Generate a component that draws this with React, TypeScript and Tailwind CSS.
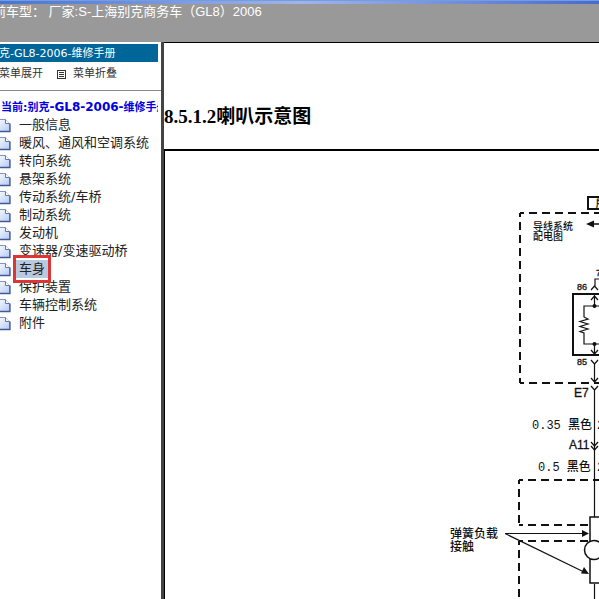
const systems = [
  '一般信息',
  '暖风、通风和空调系统',
  '转向系统',
  '悬架系统',
  '传动系统/车桥',
  '制动系统',
  '发动机',
  '变速器/变速驱动桥',
  '车身',
  '保护装置',
  '车辆控制系统',
  '附件',
];

function PageIcon() {
  return (
    <svg className="h-4 w-3 shrink-0" viewBox="0 0 12 16">
      <defs>
        <linearGradient id="page" x1="0" y1="0" x2="1" y2="1">
          <stop offset="0" stopColor="#ffffff" />
          <stop offset="1" stopColor="#b4caf4" />
        </linearGradient>
      </defs>
      <path d="M-4 2.5H5.5L9.5 6.5V14.5H-4Z" fill="url(#page)" stroke="#8296c4" />
      <path d="M5.5 2.5V6.5H9.5" fill="#fff" stroke="#6379ab" />
      <path d="M-4 14.5H10V6.5" fill="none" stroke="#435a96" strokeWidth="1.3" />
    </svg>
  );
}

function ListIcon() {
  return (
    <svg className="h-[9px] w-[9px]" viewBox="0 0 9 9" fill="none" stroke="#333" shapeRendering="crispEdges">
      <path d="M.5 .5H8.5V8.5H.5ZM2 2.5H7M2 4.5H7M2 6.5H7" />
    </svg>
  );
}

function WiringDiagram() {
  return (
    <svg
      className="block h-[448px] w-[434px] shrink-0"
      viewBox="165 151 434 448"
      fill="none"
      stroke="#111"
      fontFamily='"Liberation Sans", "Noto Sans CJK SC", sans-serif'
    >
      <g strokeWidth="2" strokeDasharray="8 5">
        <path d="M520 213V383" strokeDashoffset="4" />
        <path d="M520 213H599" strokeDashoffset="4" />
        <path d="M520 383H599" strokeDashoffset="4" />
        <path d="M519 480V525" strokeDashoffset="4" />
        <path d="M519 480H599" strokeDashoffset="4" />
        <path d="M519 525H589" strokeDashoffset="4" />
        <path d="M519 541H589" strokeDashoffset="4" />
        <path d="M519 541V599" strokeDashoffset="4" />
      </g>
      <path d="M600 197H588V209H600" strokeWidth="2" />
      <path d="M600 294H573V355H600" strokeWidth="2" />
      <path d="M592 224H599" strokeWidth="1.5" />
      <path d="M586 224L594 220.5V227.5Z" fill="#111" stroke="none" />

      <g strokeWidth="1.2">
        <path d="M599 279H595V286M591 290L594.5 286L598 290" />
        <path d="M594.5 295V306M591 300L594.5 296L598 300" />
        <path d="M599 306H584V317L588 319L580 321.5L588 324L580 326.5L588 329L580 331.5L584 333V344H599" />
        <path d="M594.5 344V353M591 350L594.5 354L598 350" />
        <path d="M591 360L594.5 364L598 360M594.5 364V382M591 378L594.5 382L598 378" />
        <path d="M591 386L594.5 390L598 386M594.5 390V517" />
        <path d="M591 442L594.5 446L598 442M591 446L594.5 450L598 446" />
        <path d="M505 533.5H584M505 533.5L584 572" />
        <path d="M594.5 584V599" />
      </g>
      <circle cx="594.5" cy="306" r="2" fill="#111" stroke="none" />
      <circle cx="594.5" cy="344" r="2" fill="#111" stroke="none" />
      <path d="M589 533.5L582 530V537ZM589 574L581 573.5L584 567Z" fill="#111" stroke="none" />
      <path d="M600 517H590V583H600" fill="#fff" strokeWidth="1.5" />
      <circle cx="594" cy="550" r="9.5" fill="#fff" strokeWidth="1.5" />

      <g fill="#111" stroke="none" fontSize="10" fontWeight="500">
        <text x="533" y="230">导线系统</text>
        <text x="533" y="240">配电图</text>
      </g>
      <g fill="#111" stroke="#111" strokeWidth=".3">
        <text x="577" y="290" fontSize="9">86</text>
        <text x="577" y="365" fontSize="9">85</text>
        <text x="596" y="276" fontSize="9">7</text>
        <text x="596" y="207" fontSize="10">所</text>
        <text x="574" y="397" fontSize="12">E7</text>
        <text x="569" y="449" fontSize="12">A11</text>
      </g>
      <g
        fill="#111"
        stroke="none"
        fontSize="12"
        fontWeight="500"
        fontFamily='"Liberation Mono", "Noto Sans CJK SC", monospace'
      >
        <text x="532" y="429">0.35 黑色</text>
        <text x="538" y="471">0.5 黑色</text>
        <text x="597" y="429">2</text>
        <text x="597" y="471">2</text>
      </g>
      <g fill="#111" stroke="none" fontSize="12" fontWeight="500">
        <text x="450" y="538">弹簧负载</text>
        <text x="450" y="551">接触</text>
      </g>
    </svg>
  );
}

export default function App() {
  return (
    <div className="flex h-screen flex-col overflow-hidden bg-white font-['Liberation_Sans','Noto_Sans_CJK_SC',sans-serif]">
      <header className="h-[42px] shrink-0 bg-[#999]">
        <div className="h-1 border-t border-[#6f9fe0] bg-gradient-to-r from-[#4a72d0] via-[#a3b4e6] via-50% to-[#4a6acb]" />
        <p className="-ml-5 whitespace-pre text-[13px] leading-4 text-white">
          当前车型： 厂家:S-上海别克商务车（GL8）2006
        </p>
      </header>

      <div className="flex min-h-0 flex-1">
        <nav className="w-[161px] shrink-0 overflow-hidden pt-0.5 font-['DejaVu_Sans','Noto_Sans_CJK_SC',sans-serif] text-[11px]">
          <h2 className="mr-[3px] h-[18px] overflow-hidden whitespace-nowrap bg-[#006699] leading-5 text-white">
            <span className="-ml-3">别克-GL8-2006-维修手册</span>
          </h2>
          <div className="-ml-px flex h-[29px] items-center gap-3.5 border-b border-[#888] pb-1 text-[#333]">
            <button type="button">菜单展开</button>
            <button type="button" className="flex items-center gap-[7px]">
              <ListIcon />
              菜单折叠
            </button>
          </div>
          <a
            href="#current"
            className="mr-[3px] block h-[25px] overflow-hidden whitespace-nowrap pt-[7px] pl-px leading-[18px] font-bold text-[#0000e0]"
          >
            当前:别克<span className="text-xs leading-[18px]">-GL8-2006-</span>维修手册
          </a>
          <ul className="text-[13px] leading-[18px] text-[#222]">
            {systems.map((name) => (
              <li key={name} className="flex h-[18px] items-center gap-1 whitespace-nowrap">
                <PageIcon />
                {name === '车身' ? (
                  <a href="#body" className="relative bg-[#b9c9df] px-[3px]">
                    {name}
                    <span className="absolute -inset-x-[3px] -inset-y-[5px] border-3 border-[#dc3535]" />
                  </a>
                ) : (
                  <a href="#system" className="px-[3px]">{name}</a>
                )}
              </li>
            ))}
          </ul>
        </nav>

        <main className="flex min-w-0 flex-1 flex-col overflow-hidden border-l-3 border-[#444]">
          <div className="h-[107px] shrink-0 border-t border-black pt-[60px]">
            <h1 className="whitespace-nowrap font-['Liberation_Serif','Noto_Sans_CJK_SC',serif] text-[19px] leading-7 font-bold text-black">
              8.5.1.2喇叭示意图
            </h1>
          </div>
          <div className="min-h-0 flex-1 overflow-hidden border-t-2 border-l border-black">
            <WiringDiagram />
          </div>
        </main>
      </div>
    </div>
  );
}
